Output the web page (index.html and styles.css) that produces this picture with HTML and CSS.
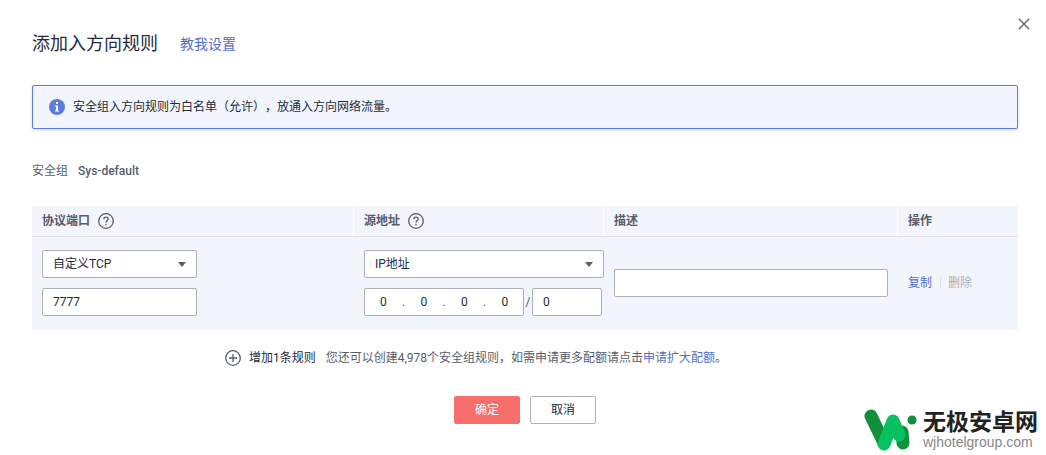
FILE: index.html
```html
<!DOCTYPE html>
<html lang="zh-CN">
    <head>
        <meta charset="utf-8">
        <title>添加入方向规则</title>
        <link rel="stylesheet" href="styles.css">
    </head>
    <body>

        <form class="dialog">
            <!-- Title -->
            <div class="header">
                <h1 class="title">添加入方向规则</h1>
                <a class="help-link" href="#">教我设置</a>
                <button class="close" type="button" aria-label="关闭">
                    <svg width="12" height="12" viewBox="0 0 12 12"><path d="M1 1l10 10M11 1L1 11"/></svg>
                </button>
            </div>

            <div class="alert">
                <svg class="info-icon" width="16" height="16" viewBox="0 0 16 16">
                    <circle cx="8" cy="8" r="8"/>
                    <path d="M7 3h2v2H7zM6 6.500h3v5h1v1H6v-1h1v-4H6z"/>
                </svg>
                <span>安全组入方向规则为白名单（允许），放通入方向网络流量。</span>
            </div>

            <div class="group">
                <span>安全组</span>
                <span class="group-name">Sys-default</span>
            </div>

            <!-- Rules -->
            <table class="rules">
                <thead>
                    <tr>
                        <th class="col-port">
                            <div class="th-label">协议端口
                                <svg class="line-icon" width="16" height="16" viewBox="0 0 16 16"><circle cx="8" cy="8" r="7.300"/><path d="M5.800 6.300c0-1.300 1-2.200 2.200-2.200s2.200.900 2.200 2c0 1.500-2.200 1.600-2.200 3.400M8 10.800v1.400"/></svg>
                            </div>
                        </th>
                        <th class="col-source">
                            <div class="th-label">源地址
                                <svg class="line-icon" width="16" height="16" viewBox="0 0 16 16"><circle cx="8" cy="8" r="7.300"/><path d="M5.800 6.300c0-1.300 1-2.200 2.200-2.200s2.200.900 2.200 2c0 1.500-2.200 1.600-2.200 3.400M8 10.800v1.400"/></svg>
                            </div>
                        </th>
                        <th class="col-desc">描述</th>
                        <th class="col-action">操作</th>
                    </tr>
                </thead>
                <tbody>
                    <tr>
                        <td>
                            <div class="fields fields-port">
                                <div class="select">
                                    <select aria-label="协议"><option>自定义TCP</option></select>
                                </div>
                                <input class="input" type="text" value="7777" aria-label="端口">
                            </div>
                        </td>
                        <td class="cell-source">
                            <div class="fields">
                                <div class="select">
                                    <select aria-label="源地址类型"><option>IP地址</option></select>
                                </div>
                                <div class="ip-row">
                                    <div class="ip">
                                        <input type="text" value="0" aria-label="IP 1"><span>.</span>
                                        <input type="text" value="0" aria-label="IP 2"><span>.</span>
                                        <input type="text" value="0" aria-label="IP 3"><span>.</span>
                                        <input type="text" value="0" aria-label="IP 4">
                                    </div>
                                    <span class="slash">/</span>
                                    <input class="input mask" type="text" value="0" aria-label="掩码">
                                </div>
                            </div>
                        </td>
                        <td><input class="input" type="text" aria-label="描述"></td>
                        <td>
                            <div class="actions">
                                <a href="#">复制</a>
                                <button class="delete" type="button" disabled>删除</button>
                            </div>
                        </td>
                    </tr>
                </tbody>
            </table>

            <div class="add-row">
                <button class="add" type="button">
                    <svg class="line-icon" width="16" height="16" viewBox="0 0 16 16"><circle cx="8" cy="8" r="7.300"/><path d="M4 8h8M8 4v8"/></svg>
                    增加1条规则
                </button>
                <span>您还可以创建4,978个安全组规则，如需申请更多配额请点击<a href="#">申请扩大配额</a>。</span>
            </div>

            <div class="footer">
                <button class="btn btn-primary" type="submit">确定</button>
                <button class="btn" type="button">取消</button>
            </div>
        </form>

        <!-- Site badge -->
        <div class="badge">
            <svg width="54" height="44" viewBox="0 0 54 44">
                <path class="dark" d="M8 9l13 27"/>
                <path class="dark" d="M39 25l1 11"/>
                <path class="light" d="M21 37l9-23 6 14"/>
                <circle cx="49" cy="13" r="4.500"/>
            </svg>
            <div class="badge-text">
                <span class="badge-name">无极安卓网</span>
                <span class="badge-url">wjhotelgroup.com</span>
            </div>
        </div>

    </body>
</html>
```

FILE: styles.css
```css
* {
    box-sizing: border-box;
}
body {
    margin: 0;
    background: #fff;
    color: #575d6c;
    font-family: Roboto, "Noto Sans CJK SC", sans-serif;
    font-size: 12px;
    line-height: 18px;
    text-spacing-trim: space-all;
}
button, input, select {
    font: inherit;
    color: #252b3a;
}
a {
    color: #526ecc;
    text-decoration: none;
}

.dialog {
    padding: 32px 28px 0 32px;
}
.header {
    display: flex;
    align-items: center;
    gap: 22px;
    height: 24px;
}
.title {
    margin: 0;
    font-size: 18px;
    font-weight: 400;
    color: #252b3a;
}
.help-link {
    font-size: 14px;
}
.close {
    position: absolute;
    top: 16px;
    right: 14px;
    display: flex;
    padding: 2px;
    border: 0;
    background: none;
}
.close svg {
    fill: none;
    stroke: #575d6c;
    stroke-width: 1.3;
}

.alert {
    display: flex;
    align-items: center;
    gap: 8px;
    height: 44px;
    margin-top: 29px;
    padding: 0 16px;
    border: 1px solid #5e7ce0;
    border-radius: 2px;
    background: #f2f5fc;
    box-shadow: 0 1px 3px rgba(94, 124, 224, .3);
    color: #252b3a;
}
.info-icon circle {
    fill: #5e7ce0;
}
.info-icon path {
    fill: #fff;
}
.group {
    display: flex;
    gap: 10px;
    margin: 33px 0 26px;
}
.group-name {
    font-weight: 500;
}

.rules {
    width: 100%;
    table-layout: fixed;
    border-collapse: separate;
    border-spacing: 0;
    background: #f2f5fc;
}
.rules th {
    height: 31px;
    padding: 0 10px;
    border-bottom: 1px solid #dfe1e6;
    border-right: 1px solid #fff;
    font-weight: 700;
    text-align: left;
}
.rules th:last-child {
    border-right: 0;
}
.rules td {
    height: 93px;
    padding: 0 10px 2px;
}
.rules .cell-source {
    padding-right: 0;
}
.col-port {
    width: 322px;
}
.col-source {
    width: 250px;
}
.col-action {
    width: 120px;
}
.th-label {
    display: flex;
    align-items: center;
    gap: 8px;
}
.line-icon {
    fill: none;
    stroke: #575d6c;
    stroke-width: 1.3;
}

.fields {
    display: flex;
    flex-direction: column;
    gap: 10px;
}
.fields-port {
    width: 155px;
}
.input, .select select, .ip {
    width: 100%;
    height: 28px;
    padding: 0 10px;
    border: 1px solid #adb0b8;
    border-radius: 2px;
    background: #fff;
    display: block;
}
.select {
    position: relative;
}
.select select {
    appearance: none;
}
.select:after {
    content: "";
    position: absolute;
    top: 12px;
    right: 11px;
    border: 4px solid transparent;
    border-top: 5px solid #575d6c;
    border-bottom: 0;
}
.ip-row {
    display: flex;
    align-items: center;
}
.ip {
    display: flex;
    align-items: center;
    width: 160px;
    padding: 0;
}
.ip input {
    flex: 1;
    min-width: 0;
    padding: 0;
    border: 0;
    background: none;
    text-align: center;
}
.ip span {
    width: 4px;
    text-align: center;
}
.slash {
    width: 8px;
    text-align: center;
}
.mask {
    width: 70px;
}
.actions {
    display: flex;
    align-items: center;
}
.delete {
    margin-left: 8px;
    padding: 0 0 0 8px;
    border: 0;
    background: linear-gradient(#dfe1e6, #dfe1e6) left center / 1px 12px no-repeat;
    color: #adb0b8;
}

.add-row {
    display: flex;
    justify-content: center;
    gap: 10px;
    margin-top: 19px;
    padding-right: 98px;
}
.add {
    display: flex;
    align-items: center;
    gap: 8px;
    padding: 0;
    border: 0;
    background: none;
}
.footer {
    display: flex;
    justify-content: center;
    gap: 10px;
    margin-top: 29px;
}
.btn {
    width: 66px;
    height: 28px;
    padding: 0;
    border: 1px solid #adb0b8;
    border-radius: 2px;
    background: #fff;
}
.btn-primary {
    border-color: #f66f6a;
    background: #f66f6a;
    color: #fff;
}

.badge {
    position: absolute;
    right: 8px;
    bottom: 4px;
    display: flex;
    align-items: center;
    gap: 6px;
}
.badge svg {
    fill: none;
    stroke-width: 13;
    stroke-linecap: round;
    stroke-linejoin: round;
}
.badge .dark {
    stroke: #11903c;
}
.badge .light {
    stroke: #07c160;
}
.badge circle {
    fill: #11903c;
}
.badge-text {
    display: flex;
    flex-direction: column;
    padding-top: 4px;
}
.badge-name {
    font-size: 23px;
    font-weight: 700;
    line-height: 22px;
    color: #222;
}
.badge-url {
    font-family: "Liberation Sans", sans-serif;
    font-size: 14px;
    line-height: 16px;
    color: #888;
}
```
